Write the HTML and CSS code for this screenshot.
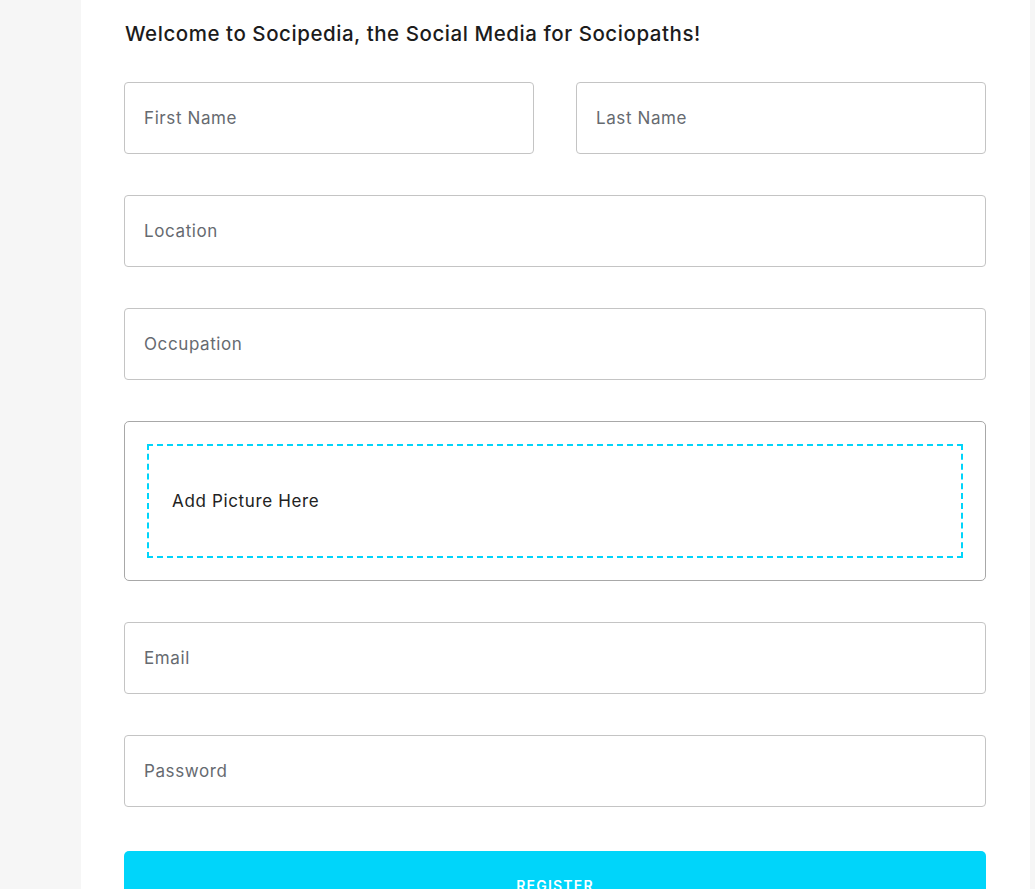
FILE: index.html
```html
<!DOCTYPE html>
<html>
<head>
<meta charset="utf-8">
<link rel="stylesheet" href="styles.css">
</head>
<body>
<div class="card">
  <h1 class="title">Welcome to Socipedia, the Social Media for Sociopaths!</h1>
  <form class="form">
    <div class="row">
      <div class="field"><span class="ph">First Name</span></div>
      <div class="field"><span class="ph">Last Name</span></div>
    </div>
    <div class="field"><span class="ph">Location</span></div>
    <div class="field"><span class="ph">Occupation</span></div>
    <div class="picture">
      <div class="drop"><span class="drop-text">Add Picture Here</span></div>
    </div>
    <div class="field"><span class="ph">Email</span></div>
    <div class="field"><span class="ph">Password</span></div>
    <div class="button">REGISTER</div>
  </form>
</div>
</body>
</html>
```
FILE: styles.css
```css
html, body {
  margin: 0;
  padding: 0;
  background: #f6f6f6;
  font-family: Inter, "Open Sans", "Liberation Sans", sans-serif;
  overflow: hidden;
}
.card {
  margin-left: 81px;
  width: 949px;
  box-sizing: border-box;
  background: #ffffff;
  padding: 21px 44px 40px 43px;
  min-height: 889px;
}
.title {
  margin: 0 0 35px 1px;
  font-size: 20.5px;
  font-weight: 500;
  color: #1c1c1c;
  line-height: 26px;
  letter-spacing: 0.55px;
}
.form {
  display: flex;
  flex-direction: column;
  gap: 41px;
}
.row {
  display: flex;
  gap: 42px;
}
.row .field {
  flex: 1;
}
.field {
  height: 72px;
  box-sizing: border-box;
  border: 1px solid #c4c4c4;
  border-radius: 4px;
  display: flex;
  align-items: center;
  padding-left: 19px;
}
.ph {
  font-size: 17px;
  color: #666a70;
  letter-spacing: 0.6px;
}
.picture {
  height: 160px;
  box-sizing: border-box;
  border: 1px solid #a8a8a8;
  border-radius: 5px;
  padding: 22px 22px;
}
.drop {
  height: 114px;
  box-sizing: border-box;
  border: 2px dashed #00d5fa;
  display: flex;
  align-items: center;
  padding-left: 23px;
}
.drop-text {
  font-size: 17px;
  color: #222;
  letter-spacing: 0.65px;
}
.button {
  height: 64px;
  margin-top: 3px;
  background: #00d5fa;
  border-radius: 5px;
  color: #fff;
  font-size: 14px;
  font-weight: 600;
  letter-spacing: 1.2px;
  text-align: center;
  padding-top: 26px;
  box-sizing: border-box;
}
```
